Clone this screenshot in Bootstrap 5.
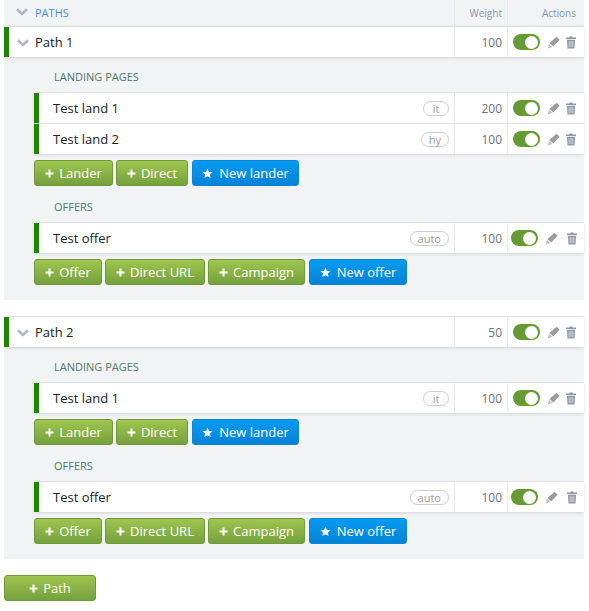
<!DOCTYPE html>
<html lang="en"><head><meta charset="utf-8"><title>Paths</title>
<link rel="stylesheet" href="https://cdn.jsdelivr.net/npm/bootstrap@5.3.0/dist/css/bootstrap.min.css">
<style>
body{font-family:"Open Sans",sans-serif;font-size:13px;color:#222;background:#fff;overflow:hidden}
.wrap{padding:0 5px 0 4px}
.hdr{height:27px;background:#f2f3f5;border-bottom:2px solid #e8e9ec;font-size:10px;color:#8a95a5}
.hdr-title{font-size:11px;color:#4a90d9;padding-left:31px;padding-top:1px;position:relative}
.chev{position:absolute;left:12px;top:50%;margin-top:-5px}
.cw{width:53px;padding-right:5px;padding-top:1px;border-left:1px solid #e8e9ec;align-self:stretch;display:flex;align-items:center;justify-content:flex-end;font-size:12px;color:#6b7280}
.hdr .cw{font-size:10px;color:#8a95a5}
.ca{width:77px;border-left:1px solid #e8e9ec;align-self:stretch;display:flex;align-items:center;justify-content:flex-end;padding-right:8px;padding-top:1px}
.pbox{background:#f2f3f5;padding-bottom:15px}
.pbox+.pbox{margin-top:17px}
.rw{height:30px;background:#fff;border-left:5px solid #1e8500;box-shadow:0 1px 3px rgba(0,0,0,.14),0 -1px 0 #e6e8eb;position:relative}
.rw .nm{padding-left:14px;padding-top:1px;font-size:13px;color:#222}
.prw .nm{padding-left:26px}
.prw .chev{left:8px;margin-top:-3px}
.ca.act{padding:0 0 0 5px;justify-content:flex-start}
.ca.shift{padding-left:3px}
.inner{padding-left:30px}
.inner .rw+.rw{margin-top:1px}
.sect{font-size:11px;color:#4d7a6a;padding:13px 0 9px 20px;line-height:14px;height:36px}
.btns+.sect{height:37px;padding-top:14px}
.tag{border:1px solid #ccc;border-radius:8px;font-size:11px;line-height:13px;height:15px;color:#999;padding:0 7px;margin-right:5px;min-width:26px;text-align:center}
.tgl{width:27px;height:16px;border-radius:8px;background:#659a35;position:relative;flex:none}
.tgl::after{content:"";position:absolute;right:2px;top:1.500px;width:13px;height:13px;border-radius:50%;background:#fff}
.ico{flex:none;display:block}
.pen{margin-left:7px}
.bin{margin-left:6px}
.shift .bin{margin-left:9px}
.btns{gap:3px;padding-top:6px}
.gbtn,.bbtn{height:26px;border-radius:3px;color:#fff;font-size:13px;line-height:24px;padding:0;display:inline-flex;align-items:center;justify-content:center;gap:5px}
.bbtn{gap:6px}
.gbtn{background:linear-gradient(#9ec64e,#76a03f);border:1px solid #6e9a3c}
.bbtn{background:linear-gradient(#059bf0,#0583d8);border:1px solid #0a86d6;margin-left:1px}
.gbtn:hover,.bbtn:hover{color:#fff}
.bl{width:79px}.bd{width:72px}.bn{width:107px}.bo{width:68px}.bu{width:100px}.bc{width:97px}.bf{width:98px}
.pth{margin:16px 0 0;width:92px}
</style></head><body>
<div class="wrap">
<svg width="0" height="0" class="d-block position-absolute"><defs>
<symbol id="c" viewBox="0 0 12 8"><path d="M1 1.200 6 6 11 1.200" fill="none" stroke="#b0b7c3" stroke-width="2.600"/></symbol>
<symbol id="pl" viewBox="0 0 9 9"><path d="M4.500 .5v8M.5 4.500h8" stroke="#fff" stroke-width="2" fill="none"/></symbol>
<symbol id="p" viewBox="0 0 13 13"><path d="M9.500 .8 12.600 3.800 6.300 10.400 2.400 7.100Z" fill="#9c9c9c"/><path d="M1.900 7.800 5.600 11 .8 12.400Z" fill="#c2c2c2"/></symbol>
<symbol id="t" viewBox="0 0 10 13"><path d="M3.500 .5h3v1H10v1.400H0V1.500h3.500ZM1 3.800h8l-.5 8.700H1.500Z" fill="#8e96a3"/><path d="M3.200 5.200v6M5 5.200v6M6.800 5.200v6" stroke="#f2f3f5" stroke-width=".7"/></symbol>
<symbol id="s" viewBox="0 0 12 12"><path d="M6 .8 7.600 4.300 11.400 4.700 8.600 7.200 9.400 11 6 9 2.600 11 3.400 7.200.6 4.700 4.400 4.300Z" fill="#fff"/></symbol>
</defs></svg>

<div class="hdr d-flex align-items-center">
  <div class="hdr-title flex-grow-1"><svg class="chev" width="12" height="8"><use href="#c"/></svg>PATHS</div>
  <div class="cw">Weight</div><div class="ca">Actions</div>
</div>

<div class="pbox">
  <div class="rw prw d-flex align-items-center"><svg class="chev" width="12" height="8"><use href="#c"/></svg><div class="nm flex-grow-1">Path 1</div><div class="cw">100</div><div class="ca act"><span class="tgl"></span><svg class="ico pen" width="13" height="13"><use href="#p"/></svg><svg class="ico bin" width="10" height="13"><use href="#t"/></svg></div></div>
  <div class="inner">
    <div class="sect">LANDING PAGES</div>
    <div class="rw d-flex align-items-center"><div class="nm flex-grow-1">Test land 1</div><span class="tag">it</span><div class="cw">200</div><div class="ca act"><span class="tgl"></span><svg class="ico pen" width="13" height="13"><use href="#p"/></svg><svg class="ico bin" width="10" height="13"><use href="#t"/></svg></div></div>
    <div class="rw d-flex align-items-center"><div class="nm flex-grow-1">Test land 2</div><span class="tag">hy</span><div class="cw">100</div><div class="ca act"><span class="tgl"></span><svg class="ico pen" width="13" height="13"><use href="#p"/></svg><svg class="ico bin" width="10" height="13"><use href="#t"/></svg></div></div>
    <div class="btns d-flex">
      <a class="btn gbtn bl"><svg width="9" height="9"><use href="#pl"/></svg>Lander</a><a class="btn gbtn bd"><svg width="9" height="9"><use href="#pl"/></svg>Direct</a><a class="btn bbtn bn"><svg width="11" height="11"><use href="#s"/></svg>New lander</a>
    </div>
    <div class="sect">OFFERS</div>
    <div class="rw d-flex align-items-center"><div class="nm flex-grow-1">Test offer</div><span class="tag">auto</span><div class="cw">100</div><div class="ca act shift"><span class="tgl"></span><svg class="ico pen" width="13" height="13"><use href="#p"/></svg><svg class="ico bin" width="10" height="13"><use href="#t"/></svg></div></div>
    <div class="btns d-flex">
      <a class="btn gbtn bo"><svg width="9" height="9"><use href="#pl"/></svg>Offer</a><a class="btn gbtn bu"><svg width="9" height="9"><use href="#pl"/></svg>Direct URL</a><a class="btn gbtn bc"><svg width="9" height="9"><use href="#pl"/></svg>Campaign</a><a class="btn bbtn bf"><svg width="11" height="11"><use href="#s"/></svg>New offer</a>
    </div>
  </div>
</div>

<div class="pbox">
  <div class="rw prw d-flex align-items-center"><svg class="chev" width="12" height="8"><use href="#c"/></svg><div class="nm flex-grow-1">Path 2</div><div class="cw">50</div><div class="ca act"><span class="tgl"></span><svg class="ico pen" width="13" height="13"><use href="#p"/></svg><svg class="ico bin" width="10" height="13"><use href="#t"/></svg></div></div>
  <div class="inner">
    <div class="sect">LANDING PAGES</div>
    <div class="rw d-flex align-items-center"><div class="nm flex-grow-1">Test land 1</div><span class="tag">it</span><div class="cw">100</div><div class="ca act"><span class="tgl"></span><svg class="ico pen" width="13" height="13"><use href="#p"/></svg><svg class="ico bin" width="10" height="13"><use href="#t"/></svg></div></div>
    <div class="btns d-flex">
      <a class="btn gbtn bl"><svg width="9" height="9"><use href="#pl"/></svg>Lander</a><a class="btn gbtn bd"><svg width="9" height="9"><use href="#pl"/></svg>Direct</a><a class="btn bbtn bn"><svg width="11" height="11"><use href="#s"/></svg>New lander</a>
    </div>
    <div class="sect">OFFERS</div>
    <div class="rw d-flex align-items-center"><div class="nm flex-grow-1">Test offer</div><span class="tag">auto</span><div class="cw">100</div><div class="ca act shift"><span class="tgl"></span><svg class="ico pen" width="13" height="13"><use href="#p"/></svg><svg class="ico bin" width="10" height="13"><use href="#t"/></svg></div></div>
    <div class="btns d-flex">
      <a class="btn gbtn bo"><svg width="9" height="9"><use href="#pl"/></svg>Offer</a><a class="btn gbtn bu"><svg width="9" height="9"><use href="#pl"/></svg>Direct URL</a><a class="btn gbtn bc"><svg width="9" height="9"><use href="#pl"/></svg>Campaign</a><a class="btn bbtn bf"><svg width="11" height="11"><use href="#s"/></svg>New offer</a>
    </div>
  </div>
</div>
<a class="btn gbtn pth"><svg width="9" height="9"><use href="#pl"/></svg>Path</a>
</div>
</body></html>
